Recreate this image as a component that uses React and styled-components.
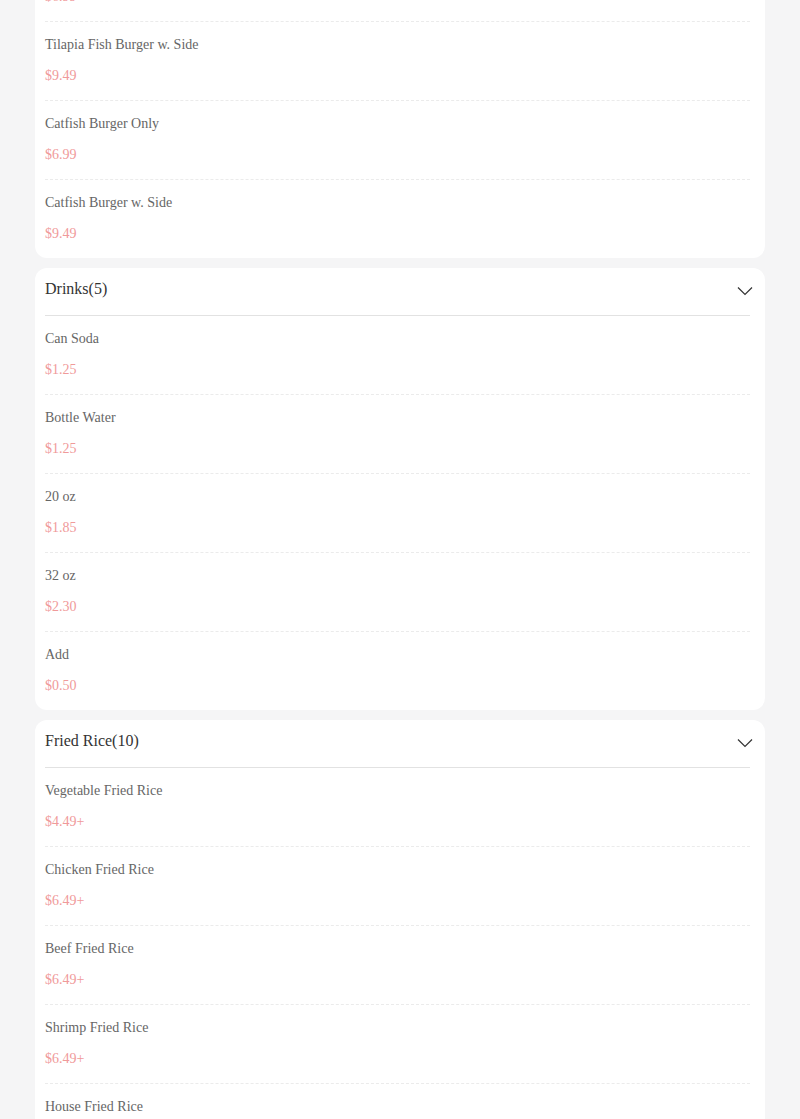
import React from "react";
import styled, { createGlobalStyle } from "styled-components";

const GlobalStyle = createGlobalStyle`
  html, body {
    margin: 0;
    padding: 0;
    background: #f5f5f6;
  }
  body {
    font-family: "Liberation Serif", "Times New Roman", serif;
  }
`;

const menu = [
  {
    name: "Burgers",
    items: [
      { name: "Tilapia Fish Burger Only", price: "$6.99" },
      { name: "Tilapia Fish Burger w. Side", price: "$9.49" },
      { name: "Catfish Burger Only", price: "$6.99" },
      { name: "Catfish Burger w. Side", price: "$9.49" },
    ],
  },
  {
    name: "Drinks",
    items: [
      { name: "Can Soda", price: "$1.25" },
      { name: "Bottle Water", price: "$1.25" },
      { name: "20 oz", price: "$1.85" },
      { name: "32 oz", price: "$2.30" },
      { name: "Add", price: "$0.50" },
    ],
  },
  {
    name: "Fried Rice",
    items: [
      { name: "Vegetable Fried Rice", price: "$4.49+" },
      { name: "Chicken Fried Rice", price: "$6.49+" },
      { name: "Beef Fried Rice", price: "$6.49+" },
      { name: "Shrimp Fried Rice", price: "$6.49+" },
      { name: "House Fried Rice", price: "$6.49+" },
      { name: "Combination Fried Rice", price: "$7.49+" },
      { name: "Pork Fried Rice", price: "$6.49+" },
      { name: "Egg Fried Rice", price: "$4.49+" },
      { name: "Chicken & Shrimp Fried Rice", price: "$7.49+" },
      { name: "Steamed Rice", price: "$2.49+" },
    ],
  },
];

const Chevron = () => (
  <svg width="16" height="10" viewBox="0 0 16 10" fill="none">
    <path d="M1 1.5 L8 8.5 L15 1.5" stroke="#333" strokeWidth="1.2" />
  </svg>
);

const App = () => {
  return (
    <>
      <GlobalStyle />
      <Page>
        {menu.map(cat => (
          <Card key={cat.name}>
            <Header>
              <Title>
                {cat.name}({cat.items.length})
              </Title>
              <Chevron />
            </Header>
            {cat.items.map(item => (
              <Item key={item.name}>
                <Name>{item.name}</Name>
                <Price>{item.price}</Price>
              </Item>
            ))}
          </Card>
        ))}
      </Page>
    </>
  );
};

export default App;

const Page = styled.div`
  margin-top: -115px;
  padding: 10px 35px;
  display: flex;
  flex-direction: column;
  gap: 10px;
`;

const Card = styled.div`
  background: #fff;
  border-radius: 12px;
  padding: 0 15px 0 10px;
`;

const Header = styled.div`
  display: flex;
  align-items: flex-start;
  justify-content: space-between;
  height: 48px;
  box-sizing: border-box;
  padding-top: 9px;
  border-bottom: 1px solid #e2e2e2;
  svg {
    margin-right: -3px;
    margin-top: 9px;
  }
`;

const Title = styled.div`
  font-size: 16px;
  line-height: 24px;
  color: #333;
`;

const Item = styled.div`
  padding: 13px 0 14px;
  display: flex;
  flex-direction: column;
  gap: 11px;
  border-bottom: 1px dashed #ebebeb;
  &:last-child {
    border-bottom: none;
  }
`;

const Name = styled.div`
  font-size: 14px;
  line-height: 20px;
  color: #666;
`;

const Price = styled.div`
  font-size: 14px;
  line-height: 20px;
  color: #f09a9a;
`;
